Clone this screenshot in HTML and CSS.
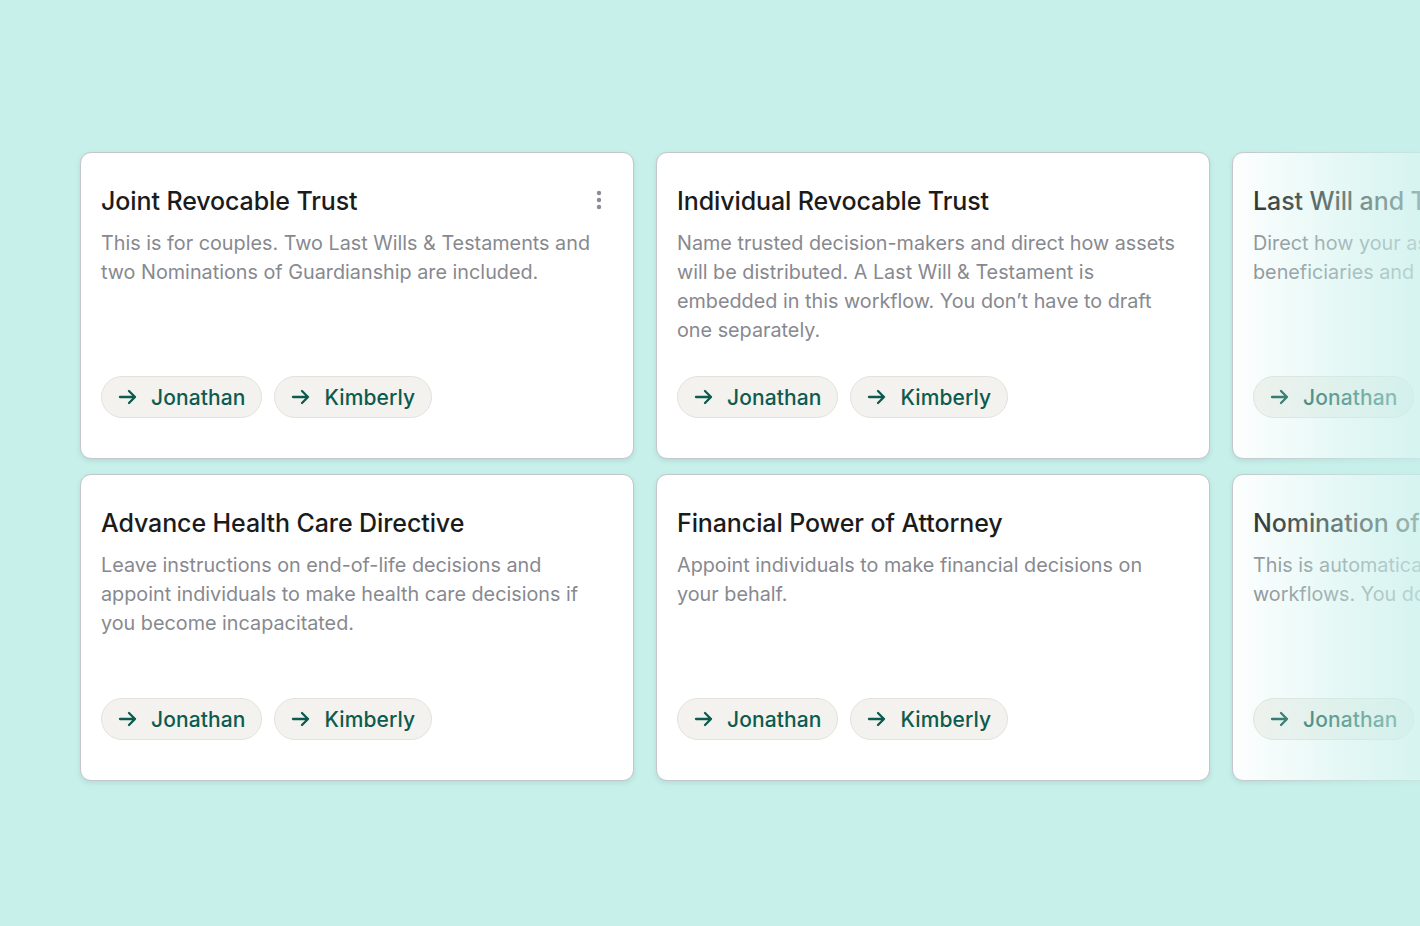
FILE: index.html
```html
<!DOCTYPE html>
<html lang="en">
<head>
<meta charset="utf-8">
<title>Workflows</title>
<link rel="stylesheet" href="styles.css">
</head>
<body>
<main class="board">
  <section class="grid">
    <article class="card">
      <header class="card-head">
        <h2 class="card-title">Joint Revocable Trust</h2>
        <button class="more" aria-label="More options">
          <svg width="6" height="20" viewBox="0 0 6 20"><circle cx="3" cy="3" r="2.2"/><circle cx="3" cy="10" r="2.2"/><circle cx="3" cy="17" r="2.2"/></svg>
        </button>
      </header>
      <p class="card-desc">This is for couples. Two Last Wills &amp; Testaments and two Nominations of Guardianship are included.</p>
      <div class="pills">
        <a class="pill"><svg class="arrow" viewBox="0 0 20 20"><path d="M2 10h15M11 4l6 6-6 6"/></svg>Jonathan</a>
        <a class="pill"><svg class="arrow" viewBox="0 0 20 20"><path d="M2 10h15M11 4l6 6-6 6"/></svg>Kimberly</a>
      </div>
    </article>
    <article class="card">
      <header class="card-head">
        <h2 class="card-title">Individual Revocable Trust</h2>
      </header>
      <p class="card-desc">Name trusted decision-makers and direct how assets will be distributed. A Last Will &amp; Testament is embedded in this workflow. You don’t have to draft one separately.</p>
      <div class="pills">
        <a class="pill"><svg class="arrow" viewBox="0 0 20 20"><path d="M2 10h15M11 4l6 6-6 6"/></svg>Jonathan</a>
        <a class="pill"><svg class="arrow" viewBox="0 0 20 20"><path d="M2 10h15M11 4l6 6-6 6"/></svg>Kimberly</a>
      </div>
    </article>
    <article class="card">
      <header class="card-head">
        <h2 class="card-title">Last Will and Testament</h2>
      </header>
      <p class="card-desc">Direct how your assets are distributed and name beneficiaries and an executor for your estate.</p>
      <div class="pills">
        <a class="pill"><svg class="arrow" viewBox="0 0 20 20"><path d="M2 10h15M11 4l6 6-6 6"/></svg>Jonathan</a>
        <a class="pill"><svg class="arrow" viewBox="0 0 20 20"><path d="M2 10h15M11 4l6 6-6 6"/></svg>Kimberly</a>
      </div>
    </article>
    <article class="card">
      <header class="card-head">
        <h2 class="card-title">Advance Health Care Directive</h2>
      </header>
      <p class="card-desc">Leave instructions on end-of-life decisions and appoint individuals to make health care decisions if you become incapacitated.</p>
      <div class="pills">
        <a class="pill"><svg class="arrow" viewBox="0 0 20 20"><path d="M2 10h15M11 4l6 6-6 6"/></svg>Jonathan</a>
        <a class="pill"><svg class="arrow" viewBox="0 0 20 20"><path d="M2 10h15M11 4l6 6-6 6"/></svg>Kimberly</a>
      </div>
    </article>
    <article class="card">
      <header class="card-head">
        <h2 class="card-title">Financial Power of Attorney</h2>
      </header>
      <p class="card-desc">Appoint individuals to make financial decisions on your behalf.</p>
      <div class="pills">
        <a class="pill"><svg class="arrow" viewBox="0 0 20 20"><path d="M2 10h15M11 4l6 6-6 6"/></svg>Jonathan</a>
        <a class="pill"><svg class="arrow" viewBox="0 0 20 20"><path d="M2 10h15M11 4l6 6-6 6"/></svg>Kimberly</a>
      </div>
    </article>
    <article class="card">
      <header class="card-head">
        <h2 class="card-title">Nomination of Guardianship</h2>
      </header>
      <p class="card-desc">This is automatically included in both trust and will workflows. You don’t have to draft one separately.</p>
      <div class="pills">
        <a class="pill"><svg class="arrow" viewBox="0 0 20 20"><path d="M2 10h15M11 4l6 6-6 6"/></svg>Jonathan</a>
        <a class="pill"><svg class="arrow" viewBox="0 0 20 20"><path d="M2 10h15M11 4l6 6-6 6"/></svg>Kimberly</a>
      </div>
    </article>
  </section>
  <div class="fade" aria-hidden="true"></div>
</main>
</body>
</html>
```

FILE: styles.css
```css
* { box-sizing: border-box; }
html, body {
  margin: 0;
  padding: 0;
  width: 1420px;
  height: 926px;
  overflow: hidden;
  background: #c8f0eb;
  font-family: Inter, "Liberation Sans", Arial, sans-serif;
}
.board {
  position: relative;
  width: 1420px;
  height: 926px;
  overflow: hidden;
  padding: 152px 0 0 80px;
}
.grid {
  display: grid;
  grid-template-columns: repeat(3, 554px);
  grid-auto-rows: 307px;
  column-gap: 22px;
  row-gap: 15px;
  width: max-content;
}
.card {
  display: flex;
  flex-direction: column;
  background: #ffffff;
  border: 1px solid #c3c6cb;
  border-radius: 11px;
  box-shadow: 0 2px 5px rgba(60, 90, 90, 0.14);
  padding: 32px 20px 40px 20px;
}
.card-head {
  display: flex;
  align-items: flex-start;
  justify-content: space-between;
}
.card-title {
  margin: 0;
  font-size: 25px;
  line-height: 32px;
  font-weight: 500;
  color: #1b1b1c;
  letter-spacing: -0.1px;
}
.more {
  border: 0;
  background: none;
  padding: 0;
  margin: 5px 11px 0 0;
  line-height: 0;
  fill: #8a8d93;
}
.card-desc {
  margin: 12px 0 0 0;
  font-size: 19.8px;
  line-height: 29px;
  color: #87898f;
  font-weight: 400;
}
.pills {
  margin-top: auto;
  display: flex;
  gap: 12px;
}
.pill {
  display: inline-flex;
  align-items: center;
  gap: 13px;
  height: 42px;
  padding: 0 16px 0 16px;
  border: 1px solid #e3e2dd;
  border-radius: 21px;
  background: #f3f2ee;
  color: #0d5b4f;
  font-size: 21px;
  font-weight: 500;
  letter-spacing: 0.1px;
  white-space: nowrap;
}
.arrow {
  width: 20px;
  height: 20px;
  fill: none;
  stroke: #0d5b4f;
  stroke-width: 2.3;
  stroke-linecap: round;
  stroke-linejoin: round;
}
.fade {
  position: absolute;
  top: 0;
  bottom: 0;
  left: 1230px;
  right: 0;
  background: linear-gradient(to right, rgba(200, 240, 235, 0.03), rgba(200, 240, 235, 0.45) 55%, rgba(200, 240, 235, 0.75));
  pointer-events: none;
}
```
